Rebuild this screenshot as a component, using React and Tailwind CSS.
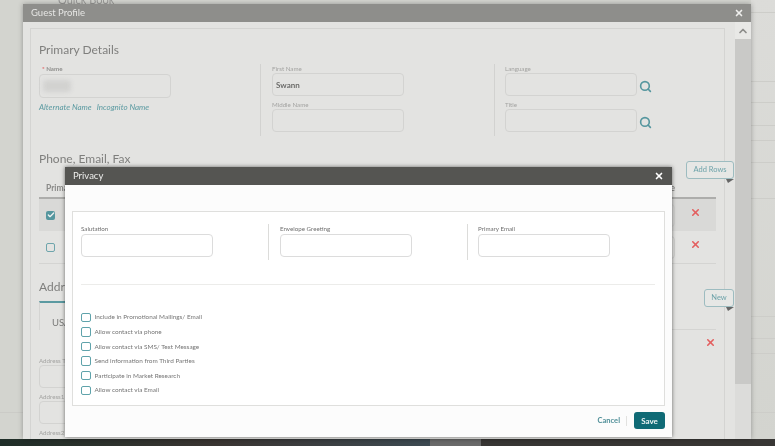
import { Check, ChevronUp, Search, X } from "lucide-react";

const PAGE_ROWS = [
  "h-[13px]",
  "h-[69px]",
  "h-[21px]",
  "h-[23px]",
  "h-[15px]",
  "h-[22px]",
  "h-[36px]",
  "h-[118px]",
  "h-[22px]",
  "h-[15px]",
  "h-[59px]",
];

const CONSENTS = [
  "Include in Promotional Mailings/ Email",
  "Allow contact via phone",
  "Allow contact via SMS/ Text Message",
  "Send information from Third Parties",
  "Participate in Market Research",
  "Allow contact via Email",
];

function CornerButton({ label, className }) {
  return (
    <div className={`absolute ${className}`}>
      <button className="block h-[18px] w-full rounded-[3px] border-[1.5px] border-[#9dbcc0] bg-[#e6e7e5] text-[7.5px] leading-none text-[#6ea3aa]">
        {label}
      </button>
      <svg width="8" height="4" viewBox="0 0 8 4" className="absolute right-0 top-[18px]">
        <polygon points="0,0 8,0 2,4" fill="#666" />
      </svg>
    </div>
  );
}

function DimField({ label, children, className = "" }) {
  return (
    <div className={className}>
      <p className="h-[9px] text-[6.2px] leading-[9px] text-[#a3a3a1]">{label}</p>
      <div className="flex items-center">
        <div className="flex h-[23px] w-[132px] items-center rounded-[4px] border border-[#d3d3d1] pl-[3px] text-[8px] font-bold text-[#6b6b69]">
          {label === "First Name" ? "Swann" : ""}
        </div>
        {children}
      </div>
    </div>
  );
}

function DeleteMark() {
  return <X size={11} strokeWidth={3.5} className="text-[#e35f5f]" />;
}

function LookupIcon() {
  return <Search size={13} strokeWidth={3} className="ml-[2px] mt-[3px] text-[#55969e]" />;
}

function GuestProfile() {
  return (
    <div className="absolute left-[23px] top-[4px] flex h-[435px] w-[728px] flex-col bg-[#e3e3e1] shadow-[0_0_5px_rgba(0,0,0,0.3)]">
      <div className="flex h-[18px] shrink-0 items-center justify-between bg-[#8e8e8b] pl-[8px] pr-[7px] text-[9.5px] text-[#e6e6e4]">
        <span>Guest Profile</span>
        <X size={10} strokeWidth={4} className="text-[#efefed]" />
      </div>
      <div className="flex min-h-0 flex-1">
        <div className="min-w-0 flex-1 pl-[7px] pr-[10px] pt-[6px]">
          <div className="h-full overflow-hidden border-x border-t border-[#d4d4d2] px-[8px]">
            <h2 className="mt-[11px] h-[20px] text-[12px] leading-[20px] text-[#7f7f7d]">Primary Details</h2>

            <div className="mt-[4px] grid h-[72px] grid-cols-[221px_234px_auto]">
              <div>
                <p className="h-[10px] pl-[3px] text-[6.2px] font-bold leading-[10px] text-[#8f8f8d]">
                  <span className="text-[#e07070]">*</span> Name
                </p>
                <div className="flex h-[24px] w-[132px] items-center rounded-[4px] border border-[#d3d3d1] pl-[3px]">
                  <div className="h-[12px] w-[28px] rounded-[4px] bg-[#d2d2d0] blur-[2px]" />
                </div>
                <p className="mt-[3px] flex gap-[5px] text-[8px] italic text-[#5b9aa1]">
                  <span>Alternate Name</span>
                  <span>Incognito Name</span>
                </p>
              </div>
              <div className="border-l border-[#d2d2d0] pl-[11px]">
                <DimField label="First Name" />
                <DimField label="Middle Name" className="mt-[4px]" />
              </div>
              <div className="border-l border-[#d2d2d0] pl-[10px]">
                <DimField label="Language">
                  <LookupIcon />
                </DimField>
                <DimField label="Title" className="mt-[4px]">
                  <LookupIcon />
                </DimField>
              </div>
            </div>

            <h2 className="mt-[13px] h-[20px] text-[12px] leading-[20px] text-[#7f7f7d]">Phone, Email, Fax</h2>

            <div className="mt-[11px] flex h-[19px] items-center justify-between border-b-2 border-[#adadab] pl-[7px] pr-[41px] text-[8.5px] font-bold text-[#8a8a88]">
              <span>Primary</span>
              <span>Type</span>
            </div>
            <div className="flex h-[32px] items-center bg-[#d9d9d7] pl-[7px] pr-[15px]">
              <span className="flex size-[9px] items-center justify-center rounded-[2px] bg-[#55969e]">
                <Check size={8} strokeWidth={4} className="text-[#eef2f2]" />
              </span>
              <div className="ml-auto h-[23px] w-[80px] rounded-[4px] border border-[#d0d0ce]" />
              <span className="mb-[6px] ml-[15px]"><DeleteMark /></span>
            </div>
            <div className="flex h-[33px] items-center border-b border-[#d4d4d2] pl-[7px] pr-[15px]">
              <span className="size-[9px] rounded-[2px] border border-[#6ea5ac]" />
              <div className="ml-auto h-[23px] w-[80px] rounded-[4px] border border-[#d0d0ce]" />
              <span className="mb-[6px] ml-[15px]"><DeleteMark /></span>
            </div>

            <h2 className="mt-[13px] h-[20px] text-[12px] leading-[20px] text-[#7f7f7d]">Address</h2>

            <div className="mt-[4px] flex h-[29px]">
              <div className="h-[29px] w-[60px] border-l border-t-2 border-l-[#d4d4d2] border-t-[#5b9aa1] pl-[12px] pt-[14px] text-[9.5px] leading-[12px] text-[#7b7b79]">
                USA
              </div>
              <div className="flex-1 border-b border-[#d4d4d2]" />
            </div>
            <div className="flex h-[24px] items-center justify-end">
              <DeleteMark />
            </div>
            <p className="mt-[2px] h-[9px] text-[6.2px] leading-[9px] text-[#a3a3a1]">Address Type</p>
            <div className="h-[23px] w-[132px] rounded-[4px] border border-[#d3d3d1]" />
            <p className="mt-[4px] h-[9px] text-[6.2px] leading-[9px] text-[#a3a3a1]">Address1</p>
            <div className="h-[23px] w-[132px] rounded-[4px] border border-[#d3d3d1]" />
            <p className="mt-[4px] h-[9px] text-[6.2px] leading-[9px] text-[#a3a3a1]">Address2</p>
          </div>
        </div>
        <div className="flex w-[16px] shrink-0 flex-col">
          <div className="flex h-[17px] items-center justify-center bg-[#e8e8e6]">
            <ChevronUp size={12} strokeWidth={3.5} className="text-[#8c8c8a]" />
          </div>
          <div className="h-[345px] bg-[#c9c9c7]" />
          <div className="flex-1 bg-[#dcdcda]" />
        </div>
      </div>
      <CornerButton label="Add Rows" className="left-[663px] top-[157px] w-[48px]" />
      <CornerButton label="New" className="left-[681px] top-[285px] w-[30px]" />
    </div>
  );
}

function PrivacyField({ label }) {
  return (
    <div>
      <p className="h-[10px] text-[6.2px] leading-[10px] text-[#6f6f6f]">{label}</p>
      <div className="h-[23px] w-[132px] rounded-[4px] border border-[#dcdcdc] bg-white" />
    </div>
  );
}

function PrivacyDialog() {
  return (
    <div className="absolute left-[65px] top-[167px] flex h-[270px] w-[607px] flex-col bg-[#fcfcfc] shadow-[0_0_4px_rgba(0,0,0,0.55)]">
      <div className="flex h-[18px] shrink-0 items-center justify-between bg-[#555552] pl-[8px] pr-[8px] text-[9.5px] text-[#eeeeec]">
        <span>Privacy</span>
        <X size={10} strokeWidth={4} className="text-white" />
      </div>
      <div className="mx-[7px] mt-[26px] h-[195px] border border-[#dfdfdd] bg-white px-[8px]">
        <div className="mt-[12px] grid h-[36px] grid-cols-[187px_199px_auto]">
          <PrivacyField label="Salutation" />
          <div className="border-l border-[#dcdcda] pl-[11px]">
            <PrivacyField label="Envelope Greeting" />
          </div>
          <div className="border-l border-[#dcdcda] pl-[10px]">
            <PrivacyField label="Primary Email" />
          </div>
        </div>
        <div className="mr-[1px] mt-[24px] h-px bg-[#ececea]" />
        <ul className="mt-[25px] flex flex-col">
          {CONSENTS.map((text) => (
            <li key={text} className="flex h-[14.6px] items-center gap-[4px] text-[6.4px] text-[#757575]">
              <span className="size-[9.5px] shrink-0 rounded-[2px] border-[1.5px] border-[#5fa3ab] bg-white" />
              {text}
            </li>
          ))}
        </ul>
      </div>
      <div className="mr-[7px] mt-[6px] flex items-center justify-end">
        <span className="text-[7.5px] font-bold text-[#4f8f98]">Cancel</span>
        <span className="mx-[6px] h-[10px] w-px bg-[#e2e2e0]" />
        <button className="ml-[1px] h-[17px] w-[31px] rounded-[3px] bg-[#0f6a75] text-[8px] font-bold text-[#eef5f5]">
          Save
        </button>
      </div>
    </div>
  );
}

export default function App() {
  return (
    <div className="flex h-[446px] w-[775px] flex-col overflow-hidden bg-[#d3d4cf] font-['Lato',sans-serif] blur-[0.35px]">
      <div className="relative flex min-h-0 flex-1">
        <div className="w-[751px] shrink-0">
          <div className="mt-[412px] border-t border-[#cbcbc7]" />
        </div>
        <div className="flex flex-1 flex-col bg-gradient-to-b from-[#dcdcd9] to-[#d3d4cf]">
          {PAGE_ROWS.map((row, i) => (
            <div key={i} className={`${row} shrink-0 border-b border-[#cdcdc9]`} />
          ))}
        </div>
        <p className="absolute left-[58px] top-[-8px] text-[11px] text-[#9a9a98]">Quick Book</p>
        <p className="absolute left-[506px] top-[430px] text-[7px] text-[#777]">Language</p>
        <GuestProfile />
        <PrivacyDialog />
      </div>
      <div className="flex h-[7px] shrink-0">
        <div className="w-[430px] bg-gradient-to-r from-[#1f2e28] via-[#3a3532] to-[#3d4a52]" />
        <div className="w-[51px] bg-[#6a6a6a]" />
        <div className="flex-1 bg-[#383634]" />
      </div>
    </div>
  );
}
